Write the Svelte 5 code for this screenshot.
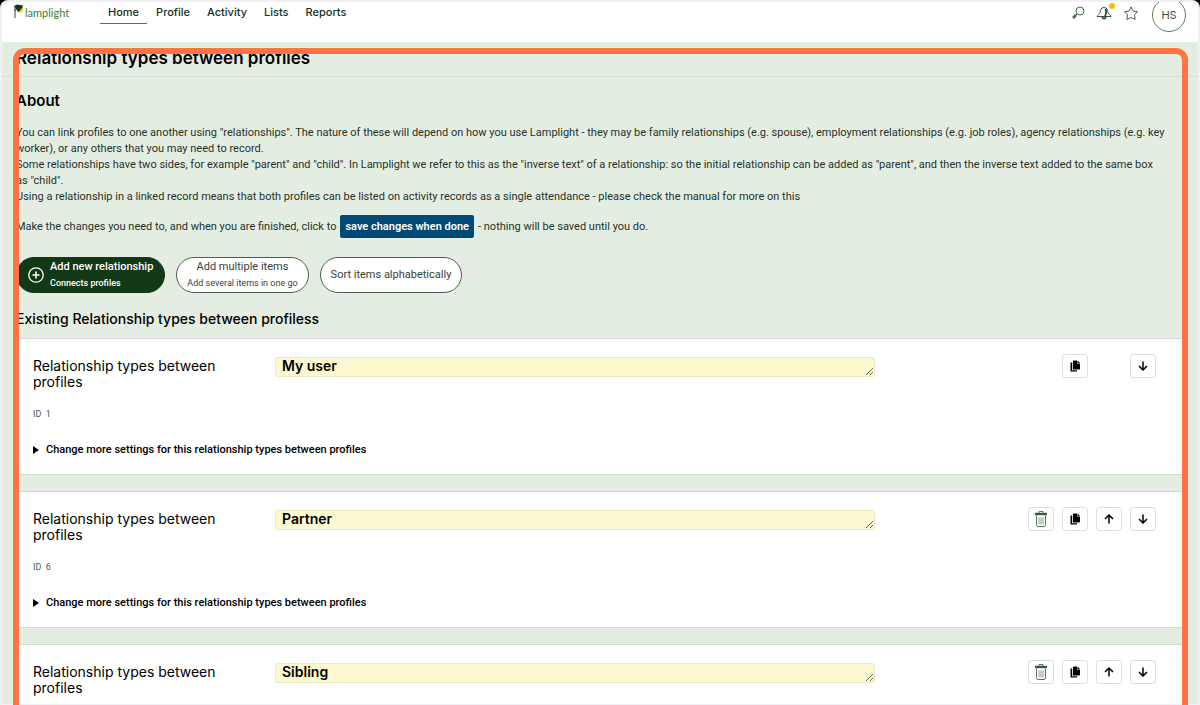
<script>
  const links = ['Home', 'Profile', 'Activity', 'Lists', 'Reports'];
  let items = $state([
    { key: 'user', id: 1, name: 'My user', remove: false, up: false },
    { key: 'partner', id: 6, name: 'Partner', remove: true, up: true },
    { key: 'sibling', id: null, name: 'Sibling', remove: true, up: true }
  ]);
</script>

<div class="shell">
  <div class="page">
    <header>
      <a class="logo" href="#home" aria-label="lamplight">
        <svg width="10" height="14" viewBox="0 0 10 14" aria-hidden="true">
          <path d="M4 7.500 9 2.500Q10 4 9 6 7.500 9 5 9Z" fill="#f6c51d" />
          <path d="M0 2 3 .5 9 1.500 8 4 4.500 8 3 6.500Z" fill="#12351b" />
          <path d="M1 3V14M0 5 2 7" stroke="#23552b" fill="none" />
        </svg>
        <span>lamplight</span>
      </a>
      <nav>
        {#each links as link, i}
          <a href="#{link.toLowerCase()}" class:active={i === 0}>{link}</a>
        {/each}
      </nav>
      <div class="tools">
        <button aria-label="Search">
          <svg width="14" height="14" viewBox="0 0 14 14" fill="none" stroke="#4a654d">
            <circle cx="9" cy="5" r="4" />
            <path d="M6 8 5 9" />
            <path d="M5 9 2 12" stroke-width="2.500" />
          </svg>
        </button>
        <button aria-label="Notifications" class="bell">
          <svg width="16" height="14" viewBox="0 0 16 14" fill="none" stroke="#365539" stroke-linejoin="round">
            <path d="M8 1.500C5 1.500 4.500 4 4 6.500 3.500 8.500 1.500 9 1 10.500H15C14.500 9 12.500 8.500 12 6.500 11.500 4 11 1.500 8 1.500Z" />
            <path d="M6 11Q8 14.500 10 11M9.500 3Q11 7 9 10" stroke="#1f4024" stroke-width="1.600" />
          </svg>
          <i></i>
        </button>
        <button aria-label="Favourites">
          <svg width="16" height="15" viewBox="0 0 16 15" fill="none" stroke="#4a654d" stroke-linejoin="round">
            <path d="M8 1 10 5 14.500 5.700 11.400 9 12.200 13.500 8 11.500 3.800 13.500 4.600 9 1.500 5.700 6 5Z" />
          </svg>
        </button>
        <button class="avatar">HS</button>
      </div>
    </header>

    <main>
      <h1>Relationship types between profiles</h1>
      <section class="intro">
        <h2>About</h2>
        <p>
          You can link profiles to one another using "relationships". The nature of these will depend on how you use Lamplight - they may be family relationships (e.g. spouse), employment relationships (e.g. job roles), agency relationships (e.g. key worker), or any others that you may need to record.<br />
          Some relationships have two sides, for example "parent" and "child". In Lamplight we refer to this as the "inverse text" of a relationship: so the initial relationship can be added as "parent", and then the inverse text added to the same box as&nbsp;"child".<br />
          Using a relationship in a linked record means that both profiles can be listed on activity records as a single attendance - please check the manual for more on this
        </p>
        <div class="save">
          <span>Make the changes you need to, and when you are finished, click to</span>
          <button>save changes when done</button>
          <span>- nothing will be saved until you do.</span>
        </div>
        <div class="actions">
          <button class="primary">
            <svg width="16" height="16" viewBox="0 0 16 16" fill="none" stroke="#fff" stroke-width="1.300" aria-hidden="true">
              <circle cx="8" cy="8" r="7.200" />
              <path d="M8 4.500V11.500M4.500 8H11.500" stroke-width="1.600" />
            </svg>
            <span>Add new relationship<small>Connects profiles</small></span>
          </button>
          <button><span>Add multiple items<small>Add several items in one go</small></span></button>
          <button>Sort items alphabetically</button>
        </div>
        <h3>Existing Relationship types between profiless</h3>
      </section>

      <div class="list">
        {#each items as item (item.key)}
          <article>
            <div class="row">
              <label for="item-{item.key}">Relationship types between profiles</label>
              <textarea id="item-{item.key}" rows="1" bind:value={item.name}></textarea>
              <div class="controls">
                {#if item.remove}
                  <button class="remove" aria-label="Delete">
                    <svg width="12" height="16" viewBox="0 0 12 16" fill="none" stroke="#5a755e">
                      <path d="M4 2V.5H8V2" />
                      <path d="M0 3H12" stroke="#3a5a3e" stroke-width="2.400" />
                      <path d="M1.500 4.500V13.500Q1.500 15.500 3 15.500H9Q10.500 15.500 10.500 13.500V4.500" />
                      <path d="M4 6.500V13.500M6 6.500V13.500M8 6.500V13.500" stroke="#8b9c8d" />
                    </svg>
                  </button>
                {/if}
                <button class="copy" aria-label="Copy">
                  <svg width="10" height="12" viewBox="0 0 10 12" fill="#000">
                    <path d="M3 1Q3 .5 3.500 .5H7V3.500H10V8.500Q10 9.500 9.500 9.500H3.500Q3 9.500 3 9ZM7.500 .5 10 3H7.500Z" />
                    <path d="M.5 2.500H2.200V10.300H7V11.500H1Q.5 11.500 .5 11Z" />
                  </svg>
                </button>
                {#if item.up}
                  <button class="up" aria-label="Move up">
                    <svg width="10" height="10" viewBox="0 0 10 10" fill="none" stroke="#000" stroke-width="1.500"><path d="M5 9.500V1M1 5 5 1 9 5" /></svg>
                  </button>
                {/if}
                <button class="down" aria-label="Move down">
                  <svg width="10" height="10" viewBox="0 0 10 10" fill="none" stroke="#000" stroke-width="1.500"><path d="M5 .5V9M1 5 5 9 9 5" /></svg>
                </button>
              </div>
            </div>
            {#if item.id}
              <div class="ident">ID&nbsp; {item.id}</div>
              <details>
                <summary>Change more settings for this relationship types between profiles</summary>
              </details>
            {/if}
          </article>
        {/each}
      </div>
    </main>
  </div>
  <div class="highlight"></div>
</div>

<style>
  :global(body) { background: #000; }
  * { box-sizing: border-box; }
  .shell {
    position: relative;
    height: 100vh;
    padding: 2px 2px 1px;
    overflow: hidden;
    border-radius: 8px 8px 0 0;
    background: #f1f0f6;
    color: #000;
    font: 11px/16px Roboto, "Open Sans", sans-serif;
  }
  .page { height: 100%; overflow: hidden; border-radius: 7px 7px 0 0; background: #e3ede2; }
  button { margin: 0; padding: 0; border: 0; background: none; color: inherit; font: inherit; cursor: pointer; }
  a { color: inherit; text-decoration: none; }
  svg { display: block; flex: none; }
  h1, h2, h3, p { margin: 0; }
  h1, h2, h3, label, textarea, nav, .tools { font-family: Inter, "Open Sans", sans-serif; }

  header { display: flex; align-items: flex-start; height: 40px; padding: 0 12px; background: #fff; }
  .logo { display: flex; width: 86px; padding-top: 2px; color: #388032; font: 11px/18px Lato, sans-serif; }
  .logo svg { margin-right: 1px; }
  nav { display: flex; gap: 1px; font-weight: 500; color: #16301b; }
  nav a { height: 22px; padding: 2px 8px 0; border-bottom: 1px solid transparent; }
  nav .active { border-color: #4c7d4c; }
  .tools { display: flex; align-items: flex-start; gap: 11px; margin-left: auto; }
  .tools button { padding-top: 4px; }
  .bell { position: relative; }
  .bell i { position: absolute; top: 1px; right: -3px; width: 6px; height: 6px; border-radius: 50%; background: #ffb90a; }
  .tools .avatar { width: 34px; height: 34px; margin: -4px 0 0 2px; padding: 0; border: 1px solid #607a63; border-radius: 50%; color: #35523b; }

  h1 { height: 35px; padding: 6px 14px 0; border-bottom: 1px solid #d9dedb; font-size: 17px; line-height: 20px; font-weight: 600; }
  .intro { padding: 14px 14px 9px; color: #26332a; }
  h2 { color: #000; font-size: 15px; line-height: 20px; font-weight: 600; }
  .intro p { margin-top: 14px; }
  .save { display: flex; align-items: center; gap: 4px; margin-top: 10px; }
  .save button { height: 23px; padding: 0 5px; border-radius: 2px; background: #004a75; color: #fff; font-weight: 600; }
  .actions { display: flex; gap: 11px; margin-top: 19px; }
  .actions button { display: flex; align-items: center; gap: 6px; height: 36px; padding: 0 10px; border: 1px solid #46614a; border-radius: 18px; background: #fff; color: #35423a; }
  .actions small { display: block; font-size: 9px; }
  .actions .primary { padding: 0 11px; border-color: #123816; background: #123816; color: #fff; font-weight: 500; text-align: left; }
  h3 { margin-top: 16px; color: #000; font-size: 14px; line-height: 20px; font-weight: 500; }

  .list { display: grid; gap: 16px; padding: 0 14px; }
  article { min-height: 137px; padding: 15px 28px 0 17px; border: solid #d3d9d4; border-width: 1px 0; background: #fff; }
  .row { display: flex; align-items: flex-start; }
  label { width: 200px; margin: 4px 42px 0 0; font-size: 14px; }
  textarea { flex: 0 1 600px; height: 20px; margin-top: 3px; padding: 0 6px; border: 1px solid #efe7c0; border-radius: 3px; background: #fcf8d2; color: #000; font-size: 14px; line-height: 16px; font-weight: 600; overflow: hidden; resize: both; }
  .controls { display: grid; grid-template-columns: repeat(4, 26px); gap: 8px; margin-left: auto; }
  .controls button { display: grid; grid-row: 1; place-items: center; height: 24px; border: 1px solid #dedfe0; border-radius: 3px; background: #fff; }
  .remove { grid-column: 1; }
  .copy { grid-column: 2; }
  .up { grid-column: 3; }
  .down { grid-column: 4; }
  .ident { margin-top: 16px; color: #555; font-size: 9px; }
  details { margin-top: 20px; }
  summary { display: flex; align-items: center; gap: 7px; font-weight: 500; cursor: pointer; }
  summary::before { content: ""; border: solid transparent; border-width: 4px 0 4px 6px; border-left-color: #000; }
  .highlight { position: absolute; inset: 48px 12px -20px 13px; border: 6px solid #ff7442; border-radius: 12px; pointer-events: none; }
</style>
